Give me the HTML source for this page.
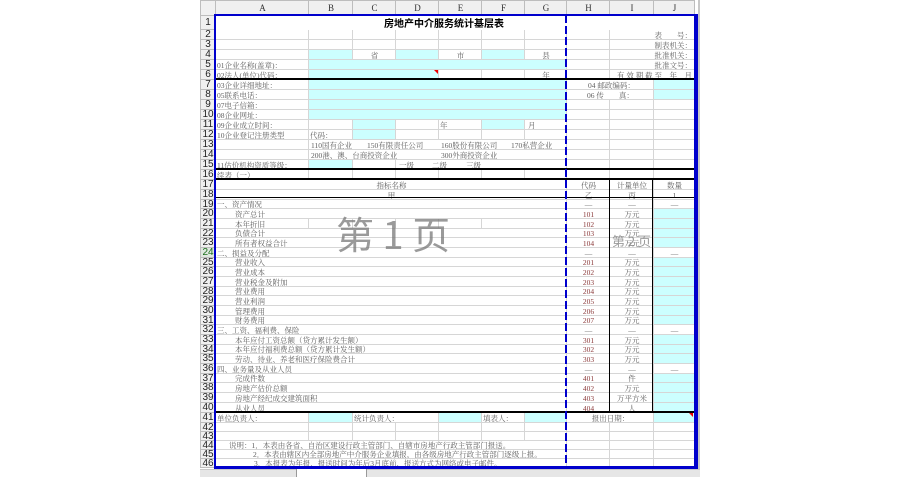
<!DOCTYPE html>
<html><head><meta charset="utf-8"><style>
html,body{margin:0;padding:0;background:#fff;width:900px;height:477px;overflow:hidden;position:relative}
table{position:absolute;left:200px;top:0;border-collapse:collapse;table-layout:fixed;width:494px}
td{border:1px solid #d6d6d6;padding:0 0 0 1px;font-family:"Liberation Serif","Noto Serif CJK SC","Noto Sans CJK SC",serif;font-size:7.5px;line-height:7px;white-space:nowrap;overflow:hidden;color:#5e5e5e;vertical-align:bottom}
.hd td{background:#f0f0f0;border-color:#bdbdbd;text-align:center;color:#333;font-size:9px;line-height:10px;vertical-align:middle}
td.rh{background:#f0f0f0;border-color:#bdbdbd;text-align:center;font-family:"Liberation Sans",sans-serif;font-size:10px;line-height:7px;color:#222;padding:0;vertical-align:middle}
.c{background:#ccffff}
.ctr{text-align:center}
.r{text-align:right;padding-right:2px}
.ind{padding-left:19px}
.cd{color:#8b3a3a;text-align:center}
.h10{height:10px}.h97{height:10px}.h9{height:9px}.h92{height:9px}
.ov{position:absolute}
</style></head><body>
<table>
<colgroup><col style="width:15px"><col style="width:93px"><col style="width:44px"><col style="width:43px"><col style="width:43px"><col style="width:43px"><col style="width:43px"><col style="width:42px"><col style="width:43px"><col style="width:44px"><col style="width:41px"></colgroup>
<tr class="hd" style="height:15px"><td></td><td>A</td><td>B</td><td>C</td><td>D</td><td>E</td><td>F</td><td>G</td><td>H</td><td>I</td><td>J</td></tr>
<tr style="height:14px"><td class="rh">1</td><td colspan="10" style="padding-left:168px;font-family:'Noto Sans CJK SC',sans-serif;font-weight:bold;font-size:10px;color:#000;line-height:12px;border-color:transparent">房地产中介服务统计基层表</td></tr>
<tr class="h10"><td class="rh">2</td><td></td><td></td><td></td><td></td><td></td><td></td><td></td><td></td><td colspan="2" class="r">表　　号：</td></tr>
<tr class="h10"><td class="rh">3</td><td></td><td></td><td></td><td></td><td></td><td></td><td></td><td></td><td colspan="2" class="r">制表机关：</td></tr>
<tr class="h10"><td class="rh">4</td><td></td><td class="c"></td><td class="ctr">省</td><td class="c"></td><td class="ctr">市</td><td class="c"></td><td class="ctr">县</td><td></td><td colspan="2" class="r">批准机关：</td></tr>
<tr class="h10"><td class="rh">5</td><td>01企业名称(盖章)：</td><td colspan="6" class="c"></td><td></td><td colspan="2" class="r">批准文号：</td></tr>
<tr class="h10"><td class="rh">6</td><td>02法人(单位)代码：</td><td colspan="3" class="c"></td><td></td><td></td><td class="ctr">年</td><td></td><td colspan="2" class="r">有 效 期 截 至　年　月</td></tr>
<tr class="h10"><td class="rh">7</td><td>03企业详细地址：</td><td colspan="6" class="c"></td><td colspan="2" style="padding-left:21px">04 邮政编码：</td><td class="c"></td></tr>
<tr class="h10"><td class="rh">8</td><td>05联系电话：</td><td colspan="6" class="c"></td><td colspan="2" style="padding-left:20px">06 传　　真：</td><td class="c"></td></tr>
<tr class="h10"><td class="rh">9</td><td>07电子信箱：</td><td colspan="6" class="c"></td><td></td><td></td><td></td></tr>
<tr class="h10"><td class="rh">10</td><td>08企业网址：</td><td colspan="6" class="c"></td><td></td><td></td><td></td></tr>
<tr class="h10"><td class="rh">11</td><td>09企业成立时间：</td><td></td><td class="c"></td><td></td><td>年</td><td class="c"></td><td style="padding-left:3px">月</td><td></td><td></td><td></td></tr>
<tr class="h10"><td class="rh">12</td><td>10企业登记注册类型</td><td>代码：</td><td class="c"></td><td></td><td></td><td></td><td></td><td></td><td></td><td></td></tr>
<tr class="h10"><td class="rh">13</td><td></td><td colspan="6" style="padding-left:2px"><span style="display:inline-block;width:56px">110国有企业</span><span style="display:inline-block;width:74px">150有限责任公司</span><span style="display:inline-block;width:70px">160股份有限公司</span>170私营企业</td><td></td><td></td><td></td></tr>
<tr class="h10"><td class="rh">14</td><td></td><td colspan="6" style="padding-left:2px"><span style="display:inline-block;width:130px">200港、澳、台商投资企业</span>300外商投资企业</td><td></td><td></td><td></td></tr>
<tr class="h10"><td class="rh">15</td><td>11估价机构资质等级：</td><td class="c"></td><td></td><td colspan="4" style="padding-left:3px"><span style="display:inline-block;width:33px">一级</span><span style="display:inline-block;width:34px">二级</span>三级</td><td></td><td></td><td></td></tr>
<tr class="h10"><td class="rh">16</td><td>续表（一）</td><td></td><td></td><td></td><td></td><td></td><td></td><td></td><td></td><td></td></tr>
<tr class="h97"><td class="rh">17</td><td colspan="7" class="ctr">指标名称</td><td class="ctr">代码</td><td class="ctr">计量单位</td><td class="ctr">数量</td></tr>
<tr class="h97"><td class="rh">18</td><td colspan="7" class="ctr">甲</td><td class="ctr">乙</td><td class="ctr">丙</td><td class="ctr">1</td></tr>
<tr class="h9"><td class="rh">19</td><td colspan="7">一、资产情况</td><td class="ctr">—</td><td class="ctr">—</td><td class="ctr">—</td></tr>
<tr class="h97"><td class="rh">20</td><td colspan="7" class="ind">资产总计</td><td class="cd">101</td><td class="ctr">万元</td><td class="c"></td></tr>
<tr class="h97"><td class="rh">21</td><td class="ind">本年折旧</td><td></td><td></td><td></td><td></td><td colspan="2"></td><td class="cd">102</td><td class="ctr">万元</td><td class="c"></td></tr>
<tr class="h9"><td class="rh">22</td><td colspan="7" class="ind">负债合计</td><td class="cd">103</td><td class="ctr">万元</td><td class="c"></td></tr>
<tr class="h97"><td class="rh">23</td><td colspan="7" class="ind">所有者权益合计</td><td class="cd">104</td><td class="ctr">万元</td><td class="c"></td></tr>
<tr class="h97"><td class="rh" style="background:#dfe8df;color:#1a6e1a">24</td><td colspan="7">二、损益及分配</td><td class="ctr">—</td><td class="ctr">—</td><td class="ctr">—</td></tr>
<tr class="h9"><td class="rh">25</td><td colspan="7" class="ind">营业收入</td><td class="cd">201</td><td class="ctr">万元</td><td class="c"></td></tr>
<tr class="h97"><td class="rh">26</td><td colspan="7" class="ind">营业成本</td><td class="cd">202</td><td class="ctr">万元</td><td class="c"></td></tr>
<tr class="h97"><td class="rh">27</td><td colspan="7" class="ind">营业税金及附加</td><td class="cd">203</td><td class="ctr">万元</td><td class="c"></td></tr>
<tr class="h9"><td class="rh">28</td><td colspan="7" class="ind">营业费用</td><td class="cd">204</td><td class="ctr">万元</td><td class="c"></td></tr>
<tr class="h97"><td class="rh">29</td><td colspan="7" class="ind">营业利润</td><td class="cd">205</td><td class="ctr">万元</td><td class="c"></td></tr>
<tr class="h97"><td class="rh">30</td><td colspan="7" class="ind">管理费用</td><td class="cd">206</td><td class="ctr">万元</td><td class="c"></td></tr>
<tr class="h9"><td class="rh">31</td><td colspan="7" class="ind">财务费用</td><td class="cd">207</td><td class="ctr">万元</td><td class="c"></td></tr>
<tr class="h97"><td class="rh">32</td><td colspan="7">三、工资、福利费、保险</td><td class="ctr">—</td><td class="ctr">—</td><td class="ctr">—</td></tr>
<tr class="h97"><td class="rh">33</td><td colspan="7" class="ind">本年应付工资总额（贷方累计发生额）</td><td class="cd">301</td><td class="ctr">万元</td><td class="c"></td></tr>
<tr class="h9"><td class="rh">34</td><td colspan="7" class="ind">本年应付福利费总额（贷方累计发生额）</td><td class="cd">302</td><td class="ctr">万元</td><td class="c"></td></tr>
<tr class="h97"><td class="rh">35</td><td colspan="7" class="ind">劳动、待业、养老和医疗保险费合计</td><td class="cd">303</td><td class="ctr">万元</td><td class="c"></td></tr>
<tr class="h97"><td class="rh">36</td><td colspan="7">四、业务量及从业人员</td><td class="ctr">—</td><td class="ctr">—</td><td class="ctr">—</td></tr>
<tr class="h9"><td class="rh">37</td><td colspan="7" class="ind">完成件数</td><td class="cd">401</td><td class="ctr">件</td><td class="c"></td></tr>
<tr class="h97"><td class="rh">38</td><td colspan="7" class="ind">房地产估价总额</td><td class="cd">402</td><td class="ctr">万元</td><td class="c"></td></tr>
<tr class="h97"><td class="rh">39</td><td colspan="7" class="ind">房地产经纪成交建筑面积</td><td class="cd">403</td><td class="ctr">万平方米</td><td class="c"></td></tr>
<tr class="h97"><td class="rh">40</td><td colspan="7" class="ind">从业人员</td><td class="cd">404</td><td class="ctr">人</td><td class="c"></td></tr>
<tr class="h10"><td class="rh">41</td><td>单位负责人：</td><td class="c"></td><td colspan="2">统计负责人：</td><td class="c"></td><td>填表人：</td><td class="c"></td><td colspan="2" class="ctr">报出日期：</td><td class="c"></td></tr>
<tr class="h92"><td class="rh">42</td><td></td><td></td><td></td><td></td><td></td><td></td><td></td><td></td><td></td><td></td></tr>
<tr class="h92"><td class="rh">43</td><td></td><td></td><td></td><td></td><td></td><td></td><td></td><td></td><td></td><td></td></tr>
<tr class="h92"><td class="rh">44</td><td colspan="7" style="padding-left:13px">说明：1．本表由各省、自治区建设行政主管部门、自辖市房地产行政主管部门报送。</td><td></td><td></td><td></td></tr>
<tr class="h92"><td class="rh">45</td><td colspan="7" style="padding-left:37px">2．本表由辖区内全部房地产中介服务企业填报，由各级房地产行政主管部门逐级上报。</td><td></td><td></td><td></td></tr>
<tr class="h92"><td class="rh">46</td><td colspan="7" style="padding-left:38px">3．本报表为年报，报送时间为年后3月底前，报送方式为网络或电子邮件。</td><td></td><td></td><td></td></tr>
</table>

<div class="ov" style="left:215px;top:78px;width:479px;height:2px;background:#000"></div>
<div class="ov" style="left:215px;top:168px;width:479px;height:2px;background:#000"></div>
<div class="ov" style="left:215px;top:178px;width:479px;height:2px;background:#000"></div>
<div class="ov" style="left:215px;top:197px;width:479px;height:1px;background:#000"></div>
<div class="ov" style="left:215px;top:411px;width:479px;height:2px;background:#000"></div>
<div class="ov" style="left:609px;top:179px;width:1px;height:233px;background:#000"></div>
<div class="ov" style="left:652px;top:179px;width:1px;height:233px;background:#000"></div>
<div class="ov" style="left:434px;top:70px;width:0;height:0;border-top:4px solid #e00;border-left:4px solid transparent"></div>
<div class="ov" style="left:689px;top:413px;width:0;height:0;border-top:4px solid #e00;border-left:4px solid transparent"></div>
<div class="ov" style="left:214px;top:14px;width:484px;height:2px;background:#0000cc"></div>
<div class="ov" style="left:214px;top:14px;width:2px;height:455px;background:#0000cc"></div>
<div class="ov" style="left:694px;top:14px;width:4px;height:455px;background:#0000cc"></div>
<div class="ov" style="left:214px;top:466px;width:484px;height:3px;background:#0000cc"></div>
<div class="ov" style="left:565px;top:15px;width:2px;height:452px;background:repeating-linear-gradient(to bottom,#0000cc 0 8px,transparent 8px 11px)"></div>
<div class="ov" style="left:698px;top:0;width:2px;height:469px;background:#c8c8c8"></div>
<div class="ov" style="left:336px;top:210px;font-family:'Noto Sans CJK SC',sans-serif;font-size:38px;line-height:46px;color:rgba(120,120,120,0.75);white-space:nowrap">第 1 页</div>
<div class="ov" style="left:612px;top:233px;font-family:'Noto Sans CJK SC',sans-serif;font-size:13px;line-height:16px;color:rgba(120,120,120,0.75);white-space:nowrap">第 2 页</div>
<div class="ov" style="left:200px;top:469px;width:500px;height:8px;background:#e6e6e6;border-top:1px solid #c8c8c8"></div>
<div class="ov" style="left:296px;top:469px;width:69px;height:8px;background:#fff;border-left:1px solid #999;border-right:1px solid #999"></div>
</body></html>
